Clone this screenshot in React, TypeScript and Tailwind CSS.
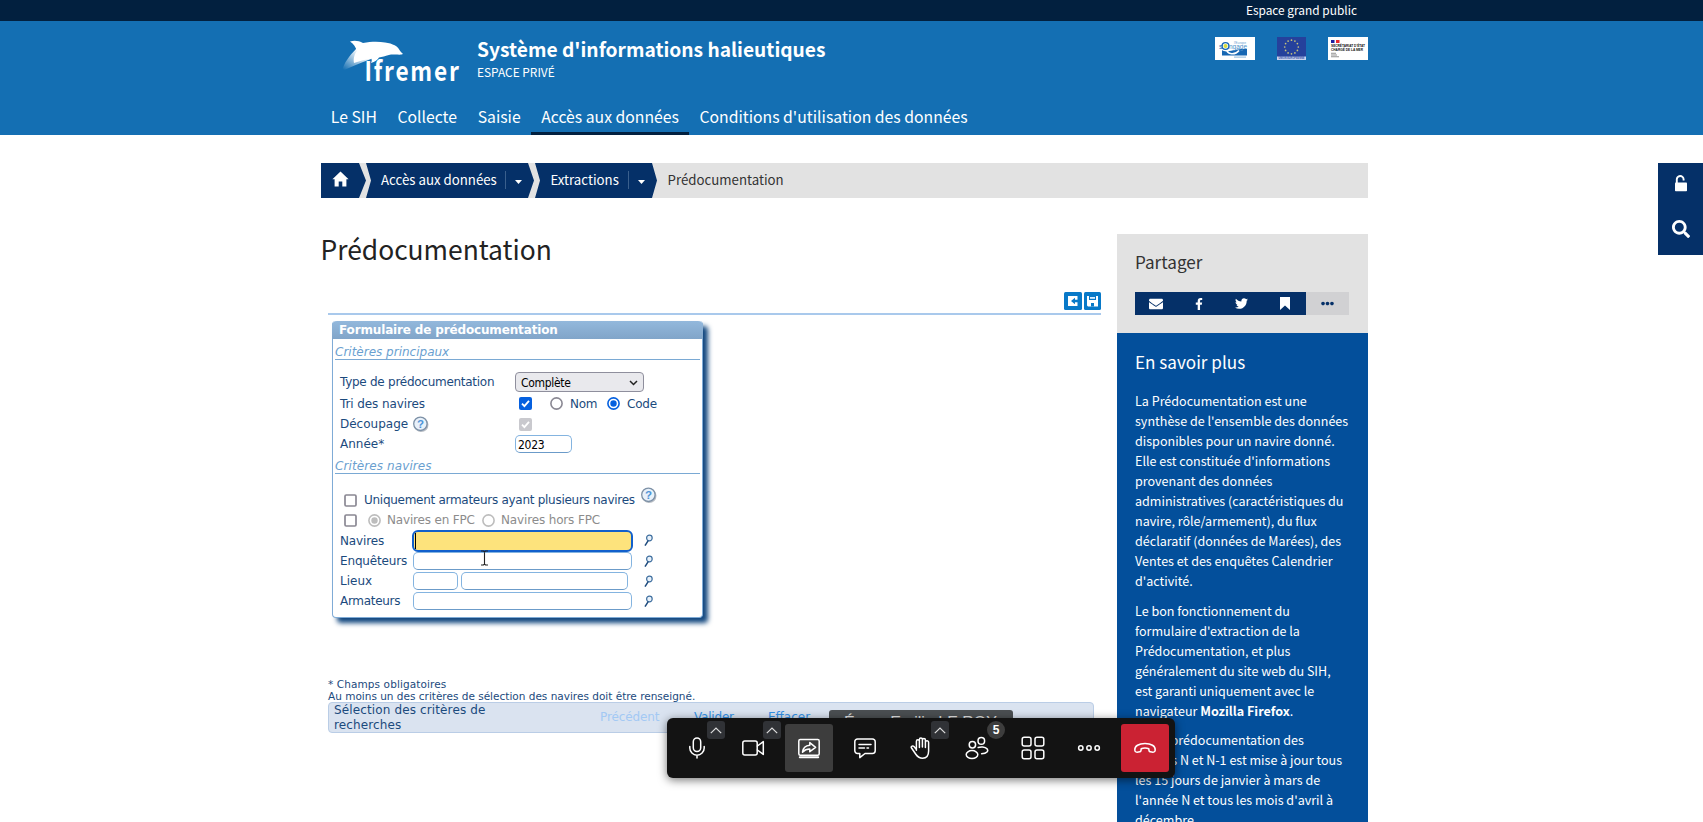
import type { ReactNode } from 'react';
import { FaEnvelope, FaFacebookF, FaTwitter, FaSearch, FaEllipsisH } from 'react-icons/fa';

const SANS = "font-['Noto_Sans_CJK_SC',sans-serif]";
const VERD = "font-['DejaVu_Sans',Verdana,sans-serif]";

function IfremerLogo() {
  return (
    <svg width="124" height="56" viewBox="0 0 124 56" className="block overflow-visible">
      <defs>
        <linearGradient id="tail" x1="1" y1="0" x2="0" y2="1">
          <stop offset="0.3" stopColor="#fff" />
          <stop offset="0.95" stopColor="#fff" stopOpacity="0" />
        </linearGradient>
      </defs>
      <path d="M15 11 C8 18 3 25 1 33 C10 29 19 25 30 21 L34 10 Z" fill="url(#tail)" />
      <path
        d="M9 3.5 C14 2 18 3 22 5 C30 3.5 38 3.5 44 4.5 C52 5.5 57 8.5 58.5 12 C59.5 14 61 15 62 15.8 C60 17.5 56 16 50 16.5 C44 18 41 19 38 19.5 C36.5 22 34 24 30 25 C31 22.5 31 21.5 30 20.5 C24 22 18 23 13 25 C12 20 14 15 16 13 C14.5 9 13 6 9 3.5 Z"
        fill="#fff"
      />
      <g transform="translate(23.6 42.8) scale(0.84 1)">
        <text fill="#fff" fontFamily="'Noto Sans CJK SC', sans-serif" fontWeight="700" fontSize="27" letterSpacing="2.1">
          Ifremer
        </text>
      </g>
    </svg>
  );
}

function EngageLogo() {
  return (
    <svg width="40" height="23" viewBox="0 0 40 23" className="block bg-white">
      <path d="M7 13 C12 17 18 11 32 12 V18.5 H7 Z" fill="#1767b3" />
      <path d="M12 12.5 C12 17.5 20 18.5 24 13.5" fill="none" stroke="#fff" strokeWidth="1.6" />
      <circle cx="10.5" cy="9" r="3.4" fill="none" stroke="#1767b3" strokeWidth="1.4" />
      <circle cx="10.5" cy="9" r="2" fill="#d8dc3a" />
      <text x="19" y="7.2" fontSize="4.2" fill="#6a9fd0" fontFamily="Liberation Sans" textLength="12" lengthAdjust="spacingAndGlyphs">l'Europe</text>
      <text x="4" y="12" fontSize="7.5" fill="#1767b3" fontFamily="Liberation Sans">s</text>
      <text x="14" y="12" fontSize="7" fill="#4c8fca" fontFamily="Liberation Sans" textLength="18" lengthAdjust="spacingAndGlyphs">ngage</text>
      <rect x="19" y="19.6" width="12" height="1" fill="#8db8dd" />
    </svg>
  );
}

function EuropeLogo() {
  const stars = Array.from({ length: 12 }, (_, i) => (i * Math.PI) / 6);
  return (
    <svg width="29" height="23" viewBox="0 0 29 23" className="block">
      <rect width="29" height="20" fill="#25419c" />
      <rect y="19.5" width="29" height="3.5" fill="#c9d3ef" />
      <text x="1.5" y="22.4" fontSize="3.2" fontWeight="700" fill="#3a54a8" fontFamily="Liberation Sans" textLength="26" lengthAdjust="spacingAndGlyphs">UNION EUROPEENNE</text>
      {stars.map((a) => (
        <circle key={a} cx={14.5 + 6.8 * Math.sin(a)} cy={10 - 6.8 * Math.cos(a)} r="0.85" fill="#c5c27c" />
      ))}
    </svg>
  );
}

function MerLogo() {
  return (
    <svg width="40" height="23" viewBox="0 0 40 23" className="block bg-white">
      <rect x="3" y="3" width="3.5" height="3" fill="#1b1fa0" />
      <rect x="8" y="3" width="3.5" height="3" fill="#e8262d" />
      <text x="3" y="10" fontSize="4.2" fontWeight="700" fill="#111" fontFamily="Liberation Sans" textLength="34" lengthAdjust="spacingAndGlyphs">SECRÉTARIAT D'ÉTAT</text>
      <text x="3" y="14" fontSize="4.2" fontWeight="700" fill="#111" fontFamily="Liberation Sans" textLength="32" lengthAdjust="spacingAndGlyphs">CHARGÉ DE LA MER</text>
      <rect x="3" y="15.8" width="5" height="0.8" fill="#777" />
      <rect x="3" y="17.6" width="6" height="0.8" fill="#777" />
      <rect x="3" y="19.4" width="8" height="0.8" fill="#777" />
    </svg>
  );
}

function Caret() {
  return (
    <svg width="7" height="4" viewBox="0 0 7 4" className="block">
      <path d="M0 0H7L3.5 4Z" fill="#fff" />
    </svg>
  );
}

function Help() {
  return (
    <svg width="18" height="18" viewBox="0 0 18 18" className="block">
      <circle cx="9.2" cy="9.8" r="7.3" fill="#b9bec4" />
      <circle cx="8.4" cy="8.8" r="6.7" fill="#e8f1fa" stroke="#7c90a6" strokeWidth="1.3" />
      <text x="8.4" y="12.8" textAnchor="middle" fontSize="11.5" fontWeight="700" fill="#4e94d8" fontFamily="Liberation Sans">?</text>
    </svg>
  );
}

function Lens() {
  return (
    <svg width="10" height="13" viewBox="0 0 10 13" className="block">
      <circle cx="5.4" cy="4" r="2.8" fill="#e8f1fa" stroke="#3f6f9f" strokeWidth="1.2" />
      <path d="M4.2 6.6 L1 11.6" stroke="#1d4a7d" strokeWidth="1.5" />
    </svg>
  );
}

function Check({ state }: { state: 'on' | 'off' | 'dim' }) {
  return (
    <svg width="13" height="13" viewBox="0 0 13 13" className="block">
      {state === 'off' ? (
        <rect x="1" y="1" width="11" height="11" rx="1.2" fill="#fff" stroke="#8a8893" strokeWidth="1.7" />
      ) : (
        <>
          <rect width="13" height="13" rx="2" fill={state === 'on' ? '#0560df' : '#c9c9ce'} />
          <path d="M3 6.7 L5.4 9.2 L10 3.8" fill="none" stroke="#fff" strokeWidth="1.8" />
        </>
      )}
    </svg>
  );
}

function Radio({ color, on }: { color: string; on?: boolean }) {
  return (
    <svg width="13" height="13" viewBox="0 0 13 13" className="block">
      <circle cx="6.5" cy="6.5" r="5.6" fill="#fff" stroke={color} strokeWidth="1.6" />
      {on && <circle cx="6.5" cy="6.5" r="3.2" fill={color} />}
    </svg>
  );
}

function Legend({ children, className }: { children: ReactNode; className: string }) {
  return (
    <div className={`mx-[2px] h-[15px] border-b-[1.5px] border-[#7aa9d4] text-[12px] leading-[14px] italic text-[#6a9fd0] ${className}`}>
      {children}
    </div>
  );
}

const box = 'rounded-[5px] border-[1.3px] border-[#84b4e0] border-b-[#6b9bc9] bg-white';

function FormPanel() {
  return (
    <div className={`${VERD} ml-[12px] mt-[6px] h-[297px] w-[371px] rounded-[4px] border border-t-0 border-[#7fabd6] bg-white text-[12px] text-[#1b4a7d] shadow-[5px_5px_5px_#12477f]`}>
      <div className="-mx-px h-[18px] rounded-t-[5px] bg-linear-to-b from-[#93b8dc] to-[#81a5c9] pl-[7px] text-[12px] leading-[18px] font-bold tracking-[-0.15px] text-white">
        Formulaire de prédocumentation
      </div>
      <Legend className="mt-[6px]">Critères principaux</Legend>
      <div className="pl-[7px] pt-[11px]">
        <div className="flex h-[22px] items-center">
          <span className="w-[175px] tracking-[-0.27px]">Type de prédocumentation</span>
          <span className="flex h-[20px] w-[129px] items-center justify-between rounded-[4px] border border-[#8f8f9d] bg-[#e9e9ed] pl-[5px] pr-[5px] pt-px font-['DejaVu_Sans_Condensed','Noto_Sans',sans-serif] text-[12px] tracking-[-0.3px] text-black">
            Complète
            <svg width="9" height="6" viewBox="0 0 9 6"><path d="M1 1L4.5 4.5L8 1" fill="none" stroke="#222" strokeWidth="1.5" /></svg>
          </span>
        </div>
        <div className="flex h-[21px] items-center">
          <span className="w-[179px] tracking-[-0.1px]">Tri des navires</span>
          <Check state="on" />
          <span className="w-[18px]" />
          <Radio color="#8a8893" />
          <span className="w-[44px] pl-[7px] tracking-[-0.3px]">Nom</span>
          <Radio color="#0560df" on />
          <span className="pl-[7px] tracking-[-0.2px]">Code</span>
        </div>
        <div className="flex h-[20px] items-center">
          <span className="w-[72px]">Découpage</span>
          <span className="w-[107px]"><Help /></span>
          <Check state="dim" />
        </div>
        <div className="flex h-[20px] items-center">
          <span className="w-[175px]">Année*</span>
          <span className={`flex h-[18px] w-[57px] items-center pl-[2px] pt-px font-['DejaVu_Sans_Condensed','Noto_Sans',sans-serif] text-[12px] tracking-[-0.3px] text-black ${box}`}>2023</span>
        </div>
      </div>
      <Legend className="mt-[5px] tracking-[0.1px]">Critères navires</Legend>
      <div className="pl-[7px] pt-[16px]">
        <div className="flex h-[20px] items-center">
          <span className="w-[24px] pl-[4px]"><Check state="off" /></span>
          <span className="w-[276px] whitespace-nowrap tracking-[-0.28px]">Uniquement armateurs ayant plusieurs navires</span>
          <span className="mb-[11px]"><Help /></span>
        </div>
        <div className="flex h-[20px] items-center text-[#8c8c8c]">
          <span className="w-[28px] pl-[4px]"><Check state="off" /></span>
          <Radio color="#bdbdbd" on />
          <span className="w-[101px] whitespace-nowrap pl-[6px] tracking-[-0.17px]">Navires en FPC</span>
          <Radio color="#bdbdbd" />
          <span className="whitespace-nowrap pl-[6px] tracking-[-0.15px]">Navires hors FPC</span>
        </div>
        <div className="relative flex h-[21px] items-center">
          <span className="w-[73px] tracking-[-0.15px]">Navires</span>
          <span className="-ml-px mr-[11px] flex h-[22px] w-[221px] items-center rounded-[6px] border-[2.5px] border-[#1260cc] bg-[#fde37c] pl-px">
            <span className="h-[16px] w-px bg-black" />
          </span>
          <Lens />
          <svg width="9" height="16" viewBox="0 0 9 16" className="absolute left-[140px] top-[20px] z-10">
            <path d="M1 1H3.5L4.5 2L5.5 1H8M4.5 2V14M1 15H3.5L4.5 14L5.5 15H8" fill="none" stroke="#222" strokeWidth="1.1" />
          </svg>
        </div>
        <div className="flex h-[20px] items-center">
          <span className="w-[73px] tracking-[-0.15px]">Enquêteurs</span>
          <span className={`mr-[12px] h-[18px] w-[219px] ${box}`} />
          <Lens />
        </div>
        <div className="flex h-[20px] items-center">
          <span className="w-[73px]">Lieux</span>
          <span className={`mr-[3px] h-[18px] w-[45px] ${box}`} />
          <span className={`mr-[16px] h-[18px] w-[167px] ${box}`} />
          <Lens />
        </div>
        <div className="flex h-[20px] items-center">
          <span className="w-[73px] tracking-[-0.3px]">Armateurs</span>
          <span className={`mr-[12px] h-[18px] w-[219px] ${box}`} />
          <Lens />
        </div>
      </div>
    </div>
  );
}

function Breadcrumb() {
  return (
    <div className="ml-px mt-[28px] flex h-[35px] bg-[#e2e2e2] text-[13.25px] leading-[33px] text-white">
      <div className="flex w-[45px] items-start bg-[#053068] pl-[11px] pt-[8px] [clip-path:polygon(0_0,38px_0,100%_50%,38px_100%,0_100%)]">
        <svg width="17" height="16" viewBox="0 0 17 16">
          <path d="M8.5 0.5L16.6 8.2H14.4V15.5H10.3V10.5H6.7V15.5H2.6V8.2H0.4Z" fill="#fff" />
        </svg>
      </div>
      <div className="flex w-[168px] bg-[#053068] pl-[15px] [clip-path:polygon(0_0,162px_0,100%_50%,162px_100%,0_100%,5px_50%)]">
        <span className="w-[124px] whitespace-nowrap">Accès aux données</span>
        <span className="mt-[8px] h-[18px] w-px bg-[#3a5f8d]" />
        <span className="ml-[9px] mt-[17px]"><Caret /></span>
      </div>
      <div className="ml-[1px] flex w-[122px] bg-[#053068] pl-[15.5px] [clip-path:polygon(0_0,117px_0,100%_50%,117px_100%,0_100%,5px_50%)]">
        <span className="w-[77.5px] whitespace-nowrap">Extractions</span>
        <span className="mt-[8px] h-[18px] w-px bg-[#3a5f8d]" />
        <span className="ml-[9px] mt-[17px]"><Caret /></span>
      </div>
      <span className="pl-[10.5px] text-[#333]">Prédocumentation</span>
    </div>
  );
}

function Sidebar() {
  return (
    <aside className="flex w-[251px] flex-col">
      <div className="h-[99px] shrink-0 bg-[#e2e2e2] px-[18px] pt-[16px]">
        <div className="text-[17.1px] leading-[24px] text-[#333]">Partager</div>
        <div className="mt-[18px] flex h-[23px]">
          <div className="grid w-[171px] grid-cols-4 place-items-center bg-[#053068] text-white">
            <FaEnvelope size={14} />
            <FaFacebookF size={12} />
            <FaTwitter size={13} />
            <svg width="10" height="13" viewBox="0 0 10 13"><path d="M0 0H10V13L5 8.5L0 13Z" fill="#fff" /></svg>
          </div>
          <div className="flex w-[43px] items-center justify-center bg-[#d1d1d3] text-[#053068]">
            <FaEllipsisH size={13} />
          </div>
        </div>
      </div>
      <div className="flex-1 bg-[#034f9b] px-[18px] pt-[17px] text-white">
        <div className="text-[17.1px] leading-[24px]">En savoir plus</div>
        <div className="mt-[17px] flex flex-col gap-[9.5px] text-[12.55px] leading-[20px] whitespace-nowrap">
          <p>La Prédocumentation est une<br />synthèse de l'ensemble des données<br />disponibles pour un navire donné.<br />Elle est constituée d'informations<br />provenant des données<br />administratives (caractéristiques du<br />navire, rôle/armement), du flux<br />déclaratif (données de Marées), des<br />Ventes et des enquêtes Calendrier<br />d'activité.</p>
          <p>Le bon fonctionnement du<br />formulaire d'extraction de la<br />Prédocumentation, et plus<br />généralement du site web du SIH,<br />est garanti uniquement avec le<br />navigateur <b>Mozilla Firefox</b>.</p>
          <p><span className="mr-[2px]">Cette</span> prédocumentation des<br />années N et N-1 est mise à jour tous<br />les 15 jours de janvier à mars de<br />l'année N et tous les mois d'avril à<br />décembre.</p>
        </div>
      </div>
    </aside>
  );
}

const stroke = { fill: 'none', stroke: '#fff', strokeWidth: 1.5, strokeLinecap: 'round', strokeLinejoin: 'round' } as const;

function Tool({ children, chevron, badge, className = '' }: { children: ReactNode; chevron?: boolean; badge?: string; className?: string }) {
  return (
    <div className={`relative flex size-[48px] items-center justify-center rounded-[3px] ${className}`}>
      <svg width="24" height="24" viewBox="0 0 24 24" {...stroke}>{children}</svg>
      {chevron && (
        <span className="absolute left-[34px] top-[-3px] flex size-[18px] items-center justify-center rounded-[3px] bg-[#303236]">
          <svg width="12" height="7" viewBox="0 0 12 7"><path d="M0.8 6.2L6 1L11.2 6.2" fill="none" stroke="#ddd" strokeWidth="1.2" /></svg>
        </span>
      )}
      {badge && (
        <span className="absolute left-[34px] top-[-3px] flex size-[18px] items-center justify-center rounded-full bg-[#3d3d3d] font-['Liberation_Sans',sans-serif] text-[12px] font-bold text-white">
          {badge}
        </span>
      )}
    </div>
  );
}

function MeetingBar() {
  return (
    <div className="absolute left-[667px] top-[718px] z-20 flex h-[60px] w-[508px] gap-[8px] rounded-[6px] bg-[#131313] p-[6px] shadow-[0_2px_10px_rgba(0,0,0,0.55)]">
      <Tool chevron>
        <rect x="8.3" y="2" width="7.4" height="13.5" rx="3.7" />
        <path d="M4.8 10.5V12A7.2 7.2 0 0 0 19.2 12V10.5M12 19.2V22" />
      </Tool>
      <Tool chevron>
        <rect x="1.8" y="5" width="14.4" height="14" rx="2" />
        <path d="M16.4 10L22.3 5.6V18.4L16.4 14" />
      </Tool>
      <Tool className="bg-[#3d3d3d]">
        <rect x="1.8" y="3.6" width="20.4" height="15.6" rx="1.5" />
        <path d="M2.8 21.2H21.2" strokeWidth="2" />
        <path d="M5.5 16.2C6 11.8 8.8 9.6 12.8 9.3V6.6L18.6 11.3L12.8 15.7V13.1C10 13.1 7.6 14 5.5 16.2Z" />
      </Tool>
      <Tool>
        <path d="M4.5 3H19.5A2.7 2.7 0 0 1 22.2 5.7V14.8A2.7 2.7 0 0 1 19.5 17.5H12L6.8 21.6V17.5H4.5A2.7 2.7 0 0 1 1.8 14.8V5.7A2.7 2.7 0 0 1 4.5 3Z" />
        <path d="M6 8.4H18M6 12H11.5M14 12H15.5" />
      </Tool>
      <Tool chevron>
        <path d="M7.4 14.3V5.3A1.5 1.5 0 0 1 10.4 5.3V11.5M10.4 11V3.5A1.5 1.5 0 0 1 13.4 3.5V11M13.4 11V3.9A1.5 1.5 0 0 1 16.4 3.9V11.5M16.4 11.5V6.4A1.5 1.5 0 0 1 19.6 6.4V15C19.6 19.8 17.4 22.2 13.6 22.2C10.4 22.2 8.6 20.8 6.8 18.2L2.2 11.5C1.8 10.3 3.8 9.3 5 10.5L7.4 13.6" />
      </Tool>
      <Tool badge="5">
        <circle cx="7.4" cy="8.8" r="3.2" />
        <ellipse cx="7" cy="18.6" rx="5.8" ry="4" />
        <circle cx="16.3" cy="4.9" r="3.3" />
        <path d="M13.2 11.5C15.5 10.6 20 10.5 22 12.7C23.8 15 22 17.6 16.6 17.8" />
      </Tool>
      <Tool>
        <rect x="1.2" y="1.2" width="8.8" height="8.8" rx="2" />
        <rect x="14" y="1.2" width="8.8" height="8.8" rx="2" />
        <rect x="1.2" y="14" width="8.8" height="8.8" rx="2" />
        <rect x="14" y="14" width="8.8" height="8.8" rx="2" />
      </Tool>
      <Tool>
        <circle cx="3.8" cy="12" r="2.2" />
        <circle cx="12" cy="12" r="2.2" />
        <circle cx="20.2" cy="12" r="2.2" />
      </Tool>
      <Tool className="bg-[#cb2233]">
        <path d="M1.8 14.2C1.4 9.8 6 7.6 12 7.6S22.6 9.8 22.2 14.2C22 16.6 19.8 16.4 17.2 15.8C16 15.5 15.8 14.5 15.8 12.7C13.5 11.9 10.5 11.9 8.2 12.7C8.2 14.5 8 15.5 6.8 15.8C4.2 16.4 2 16.6 1.8 14.2Z" />
      </Tool>
    </div>
  );
}

export default function App() {
  return (
    <div className={`${SANS} relative h-[822px] w-[1703px] overflow-hidden bg-white`}>
      <div className="h-[21px] bg-[#02203f] pr-[346px] text-right text-[11.9px] leading-[19px] text-white">
        Espace grand public
      </div>
      <header className="h-[114px] bg-[#146fb3] pl-[320px] text-white">
        <div className="flex h-[78px] w-[1048px]">
          <div className="w-[157px] pl-[21px] pt-[17px]"><IfremerLogo /></div>
          <div className="flex-1 pt-[15px]">
            <div className="text-[19.2px] leading-[26px] font-bold">Système d'informations halieutiques</div>
            <div className="pt-px text-[11.9px] leading-[18px]">ESPACE PRIVÉ</div>
          </div>
          <div className="flex gap-[22px] pt-[16px]">
            <EngageLogo />
            <EuropeLogo />
            <MerLogo />
          </div>
        </div>
        <nav className="flex h-[36px] pl-[0.5px] text-[15.75px] leading-[35px]">
          <span className="px-[10.3px]">Le SIH</span>
          <span className="px-[10.3px]">Collecte</span>
          <span className="px-[10.3px]">Saisie</span>
          <span className="border-b-[3px] border-[#02203f] px-[10.3px]">Accès aux données</span>
          <span className="px-[10.3px]">Conditions d'utilisation des données</span>
        </nav>
      </header>
      <div className="flex h-[687px]">
        <main className="ml-[320px] w-[1048px]">
          <Breadcrumb />
          <div className="flex h-[624px] justify-between pt-[36px]">
            <div className="w-[781px]">
              <h1 className="pl-[0.5px] pt-px text-[26.4px] leading-[28px] text-[#222]">Prédocumentation</h1>
              <div className="ml-[8px] mt-[29px] flex h-[23px] justify-end gap-[2px] border-b-2 border-[#a9c9ec]">
                <svg width="18" height="18" viewBox="0 0 18 18">
                  <rect width="18" height="18" rx="1.5" fill="#0879c8" />
                  <path d="M4 4H13.5V14H4Z" fill="#fff" />
                  <path d="M14 7.8H11V5.8L7 9L11 12.2V10.2H14Z" fill="#0879c8" />
                </svg>
                <svg width="17" height="18" viewBox="0 0 17 18">
                  <rect width="17" height="18" rx="1.5" fill="#0879c8" />
                  <path d="M3 4H14V14.5H4L3 13.5Z" fill="#fff" />
                  <path d="M5 4H12V8H5Z" fill="#0879c8" />
                  <path d="M6 5H11V6.8H6Z" fill="#dceeff" />
                  <path d="M7 11H10V14.5H7Z" fill="#0879c8" />
                </svg>
              </div>
              <FormPanel />
              <div className={`${VERD} ml-[8px] mt-[60px] text-[#1b4a7d]`}>
                <div className="text-[10.5px] leading-[12px] whitespace-nowrap"><span className="tracking-[0.1px]">* Champs obligatoires</span><br />Au moins un des critères de sélection des navires doit être renseigné.</div>
                <div className="relative flex h-[31px] w-[766px] items-center rounded-[4px] border border-[#bacde6] bg-[#dae3f0] pl-[5px] text-[12px] leading-[14.5px]">
                  <span className="w-[266px] tracking-[0.13px]">Sélection des critères de<br />recherches</span>
                  <span className="w-[94px] tracking-[-0.1px] text-[#a3c9f4]">Précédent</span>
                  <span className="w-[74px] tracking-[-0.2px] text-[#3391e6]">Valider</span>
                  <span className="text-[#3391e6]">Effacer</span>
                  <div className="absolute left-[500px] top-[7px] h-[40px] w-[184px] rounded-[3px] bg-[#4b4f52] pl-[15px] pt-[3px] font-['Liberation_Sans',sans-serif] text-[16px] leading-[20px] text-[#e4e4e4]">
                    Écran Emilie LE ROY
                  </div>
                </div>
              </div>
            </div>
            <Sidebar />
          </div>
        </main>
        <div className="ml-auto mt-[28px] flex h-[92px] w-[45px] flex-col items-center bg-[#053068] pt-[12px] text-white">
          <svg width="14" height="17" viewBox="0 0 14 17">
            <path d="M2.8 8V4.6A3.4 3.4 0 0 1 9.6 4.2V5.6" fill="none" stroke="#fff" strokeWidth="1.9" />
            <rect x="1" y="7.6" width="12" height="8.6" rx="0.8" fill="#fff" />
          </svg>
          <FaSearch size={18} className="mt-[28px]" />
        </div>
      </div>
      <MeetingBar />
    </div>
  );
}
